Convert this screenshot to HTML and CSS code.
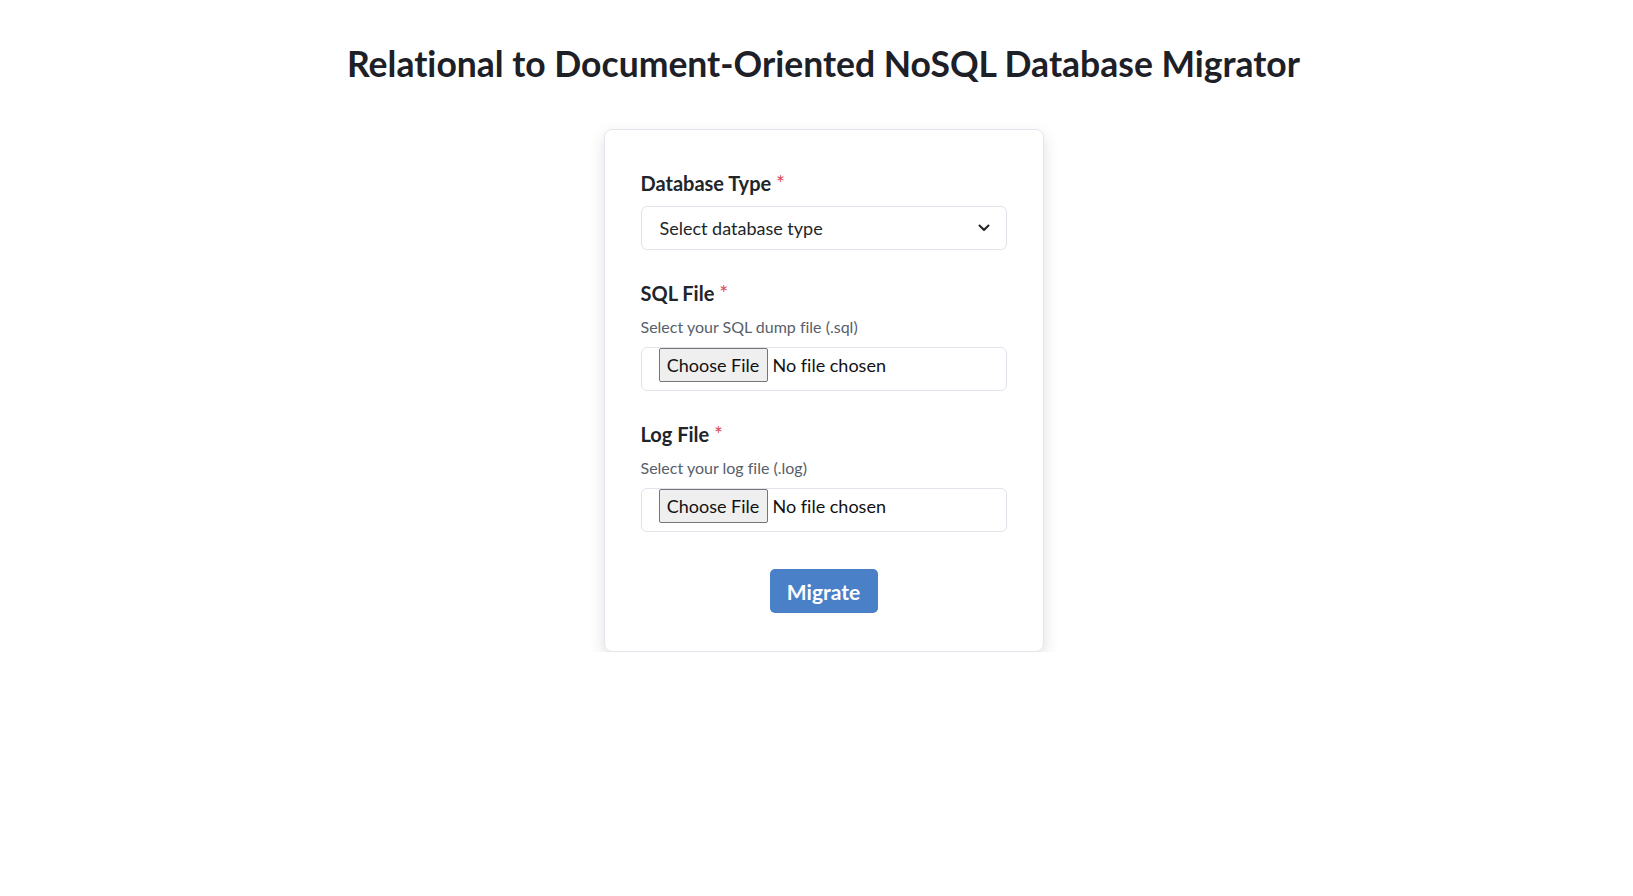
FILE: index.html
```html
<!DOCTYPE html>
<html lang="en">
<head>
<meta charset="utf-8">
<title>Relational to Document-Oriented NoSQL Database Migrator</title>
<link rel="stylesheet" href="styles.css">
</head>
<body>
<main class="page">
  <h1 class="title">Relational to Document-Oriented NoSQL Database Migrator</h1>
  <form class="card">
    <div class="field">
      <label class="label">Database Type <span class="req">*</span></label>
      <div class="select">
        <span>Select database type</span>
        <svg class="chevron" width="12" height="8" viewBox="0 0 12 8"><path d="M1.5 1.5 L6 6 L10.5 1.5" fill="none" stroke="#222" stroke-width="2" stroke-linecap="round" stroke-linejoin="round"/></svg>
      </div>
    </div>
    <div class="field">
      <label class="label">SQL File <span class="req">*</span></label>
      <p class="hint">Select your SQL dump file (.sql)</p>
      <div class="file"><span class="file-btn">Choose File</span><span class="file-name">No file chosen</span></div>
    </div>
    <div class="field">
      <label class="label">Log File <span class="req">*</span></label>
      <p class="hint">Select your log file (.log)</p>
      <div class="file"><span class="file-btn">Choose File</span><span class="file-name">No file chosen</span></div>
    </div>
    <div class="actions">
      <button type="button" class="btn">Migrate</button>
    </div>
  </form>
</main>
</body>
</html>
```
FILE: styles.css
```css
html, body {
  margin: 0;
  padding: 0;
  background: #ffffff;
}
body {
  font-family: Lato, "Noto Sans", "Liberation Sans", sans-serif;
  font-variant-ligatures: none;
  color: #212529;
}
.page {
  padding: 0 0 0 14px;
  display: flex;
  flex-direction: column;
  align-items: center;
}
.title {
  margin: 39px 0 0;
  font-size: 35.5px;
  line-height: 50px;
  font-weight: 700;
  color: #1d2027;
  text-align: center;
}
.card {
  margin-top: 40px;
  width: 440px;
  box-sizing: border-box;
  padding: 39px 36px 38px;
  border: 1px solid #e3e6ec;
  border-radius: 8px;
  background: #fff;
  box-shadow: 0 6px 16px rgba(0, 0, 0, 0.13);
  display: flex;
  flex-direction: column;
}
.field {
  display: flex;
  flex-direction: column;
  margin-bottom: 29px;
}
.label {
  font-size: 20px;
  line-height: 27px;
  font-weight: 700;
  color: #212529;
  margin-bottom: 9px;
}
.req {
  color: #dc4a57;
  font-weight: 400;
  font-size: 21px;
}
.hint {
  margin: 0 0 9px;
  font-size: 16px;
  line-height: 22px;
  color: #58606b;
}
.select {
  height: 44px;
  box-sizing: border-box;
  border: 1px solid #dfe3ea;
  border-radius: 6px;
  padding: 0 16px 0 18px;
  display: flex;
  align-items: center;
  justify-content: space-between;
  font-size: 18px;
  color: #212529;
}
.file {
  height: 44px;
  box-sizing: border-box;
  border: 1px solid #dfe3ea;
  border-radius: 6px;
  padding: 0 0 0 17px;
  display: flex;
  align-items: flex-start;
  font-size: 18px;
  white-space: nowrap;
}
.file-btn {
  flex: none;
  height: 34px;
  width: 109px;
  box-sizing: border-box;
  padding: 0;
  border: 1px solid #767676;
  border-radius: 2px;
  background: #efefef;
  color: #111;
  display: flex;
  align-items: center;
  justify-content: center;
  white-space: nowrap;
}
.file-name {
  margin-left: 5px;
  height: 34px;
  display: flex;
  align-items: center;
  color: #111;
}
.actions {
  display: flex;
  justify-content: center;
  margin-top: 8px;
}
.btn {
  width: 108px;
  height: 44px;
  border: none;
  border-radius: 5px;
  background: #4a80c8;
  color: #fff;
  font-family: inherit;
  font-size: 21px;
  font-weight: 700;
  cursor: pointer;
}
```
